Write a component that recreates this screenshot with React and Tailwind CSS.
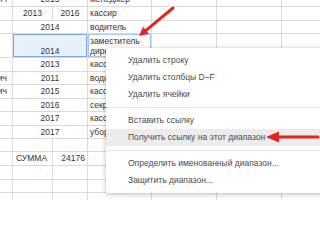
import React from 'react';

const rows = [
  { h: 14, a: 'вич', b: '2015', merged: true, d: 'менеджер' },
  { h: 14, b: '2013', c: '2016', d: 'кассир' },
  { h: 13, b: '2014', merged: true, d: 'водитель' },
  { h: 24, b: '2014', merged: true, selected: true, d: 'заместитель директора' },
  { h: 14, b: '2013', merged: true, d: 'кассир' },
  { h: 13, a: 'ич', b: '2011', merged: true, d: 'водитель' },
  { h: 14, a: 'ич', b: '2015', merged: true, d: 'кассир' },
  { h: 13, b: '2016', merged: true, d: 'секретарь' },
  { h: 14, b: '2017', merged: true, d: 'кассир' },
  { h: 13, b: '2017', merged: true, d: 'уборщица' },
  { h: 13 },
  { h: 14, b: 'СУММА', c: '24176', sum: true },
  { h: 14 },
  { h: 13 },
  { h: 14 },
];

const menu = [
  { label: 'Удалить строку' },
  { label: 'Удалить столбцы D–F' },
  { label: 'Удалить ячейки' },
  { sep: true },
  { label: 'Вставить ссылку' },
  { label: 'Получить ссылку на этот диапазон', active: true },
  { sep: true },
  { label: 'Определить именованный диапазон...' },
  { label: 'Защитить диапазон...' },
];

function Row({ row }) {
  const base = 'border-r border-b border-[#dadada] flex overflow-hidden shrink-0';
  const cell = `${base} whitespace-nowrap`;
  return (
    <div className="flex" style={{ height: row.h }}>
      <div className={`${cell} w-[13px] items-center justify-end pr-[5px]`}>{row.a}</div>
      {row.merged ? (
        <div
          className={`${cell} w-[75px] justify-center ${
            row.selected
              ? 'items-end pb-[2px] bg-[#e8f0fd] shadow-[inset_0_0_0_1px_#7ea7e6]'
              : 'items-center'
          }`}
        >
          {row.b}
        </div>
      ) : (
        <>
          <div className={`${cell} w-[40px] items-center ${row.sum ? 'pl-[3px]' : 'justify-center'}`}>{row.b}</div>
          <div className={`${cell} w-[35px] items-center ${row.sum ? 'justify-end pr-[2px]' : 'justify-center'}`}>{row.c}</div>
        </>
      )}
      {row.selected ? (
        <div className={`${base} w-[64px] items-end pl-[2px] pb-[1px] leading-[10px] shadow-[inset_0_0_0_1px_#aac5ee]`}>
          <span>{row.d}</span>
        </div>
      ) : (
        <div className={`${cell} w-[64px] items-center pl-[2px]`}>{row.d}</div>
      )}
      <div className={`${cell} w-[65px]`} />
      <div className={`${cell} w-[65px]`} />
      <div className={`${cell} w-[60px]`} />
    </div>
  );
}

export default function App() {
  return (
    <div
      className="relative w-[320px] h-[200px] overflow-hidden bg-white text-[#333] text-[8.5px] leading-none"
      style={{ fontFamily: '"Liberation Sans", Arial, sans-serif' }}
    >
      <div className="-mt-[7px] w-[362px]">
        {rows.map((row, i) => (
          <Row key={i} row={row} />
        ))}
      </div>

      <div className="absolute left-[106px] top-[48px] w-[230px] bg-white py-[4px] shadow-[0_1px_5px_rgba(0,0,0,0.28)] text-[#4a4a4a] text-[8.5px]">
        {menu.map((item, i) =>
          item.sep ? (
            <div key={i} className="h-[9px] flex items-center">
              <div className="w-full border-t border-[#e3e3e3]" />
            </div>
          ) : (
            <div
              key={i}
              className={`h-[17px] flex items-center pl-[22px] whitespace-nowrap ${item.active ? 'bg-[#ececec]' : ''}`}
            >
              {item.label}
            </div>
          )
        )}
      </div>

      <svg className="absolute inset-0 pointer-events-none" width="320" height="200" viewBox="0 0 320 200">
        <line x1="173" y1="8" x2="146" y2="30.3" stroke="#e42521" strokeWidth="3" strokeLinecap="round" />
        <polygon points="139,36 148.8,33.8 143.1,26.8" fill="#e42521" />
        <line x1="278" y1="137" x2="318" y2="137" stroke="#e42521" strokeWidth="3" strokeLinecap="round" />
        <polygon points="266,137 279,131.5 279,142.5" fill="#e42521" />
      </svg>
    </div>
  );
}
